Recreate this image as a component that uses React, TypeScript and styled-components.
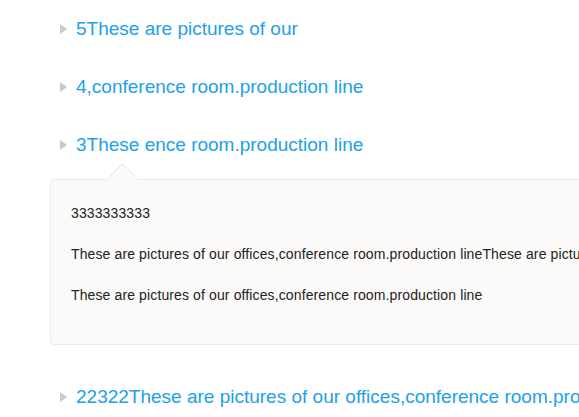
import React from "react";
import styled, { createGlobalStyle } from "styled-components";

const Global = createGlobalStyle`
  html, body { margin: 0; padding: 0; background: #ffffff; overflow: hidden; }
  body { font-family: Arial, "Liberation Sans", sans-serif; }
`;

const List = styled.ul`
  list-style: none;
  margin: 0;
  padding: 0 0 0 50px;
  display: flex;
  flex-direction: column;
  gap: 2px;
  width: 700px;
`;

const Item = styled.li`
  display: flex;
  flex-direction: column;
`;

const Header = styled.div`
  box-sizing: border-box;
  display: flex;
  align-items: center;
  gap: 9px;
  height: 56px;
  padding: 2px 0 0 10px;
  font-family: Arial, "Liberation Sans", sans-serif;
  font-size: 19px;
  color: #22a0e8;
  white-space: nowrap;
  cursor: pointer;
`;

const Arrow = styled.span`
  width: 0;
  height: 0;
  border-top: 5px solid transparent;
  border-bottom: 5px solid transparent;
  border-left: 7px solid #c8c8c8;
  flex: none;
`;

const Panel = styled.div`
  position: relative;
  margin: 7px 0 21px;
  padding: 23px 20px 18px;
  background: #fbfaf8;
  border: 1px solid #efebe3;
  border-radius: 4px;
  &::before {
    content: "";
    position: absolute;
    top: -12px;
    left: 60px;
    width: 22px;
    height: 22px;
    background: #fbfaf8;
    border-top: 1px solid #efebe3;
    border-left: 1px solid #efebe3;
    transform: rotate(45deg);
  }
`;

const Para = styled.p`
  position: relative;
  margin: 0 0 21px;
  font-family: Arial, "Liberation Sans", sans-serif;
  font-size: 14px;
  letter-spacing: 0.12px;
  line-height: 20px;
  color: #222;
  white-space: nowrap;
`;

const items = [
  { title: "5These are pictures of our" },
  { title: "4,conference room.production line" },
  {
    title: "3These ence room.production line",
    body: [
      "3333333333",
      "These are pictures of our offices,conference room.production lineThese are pictures of our offices,conference room.production line",
      "These are pictures of our offices,conference room.production line",
    ],
  },
  { title: "22322These are pictures of our offices,conference room.production line" },
];

export default function App() {
  return (
    <>
      <Global />
      <List>
        {items.map((it) => (
          <Item key={it.title}>
            <Header>
              <Arrow />
              {it.title}
            </Header>
            {it.body && (
              <Panel>
                {it.body.map((p, i) => (
                  <Para key={i}>{p}</Para>
                ))}
              </Panel>
            )}
          </Item>
        ))}
      </List>
    </>
  );
}
